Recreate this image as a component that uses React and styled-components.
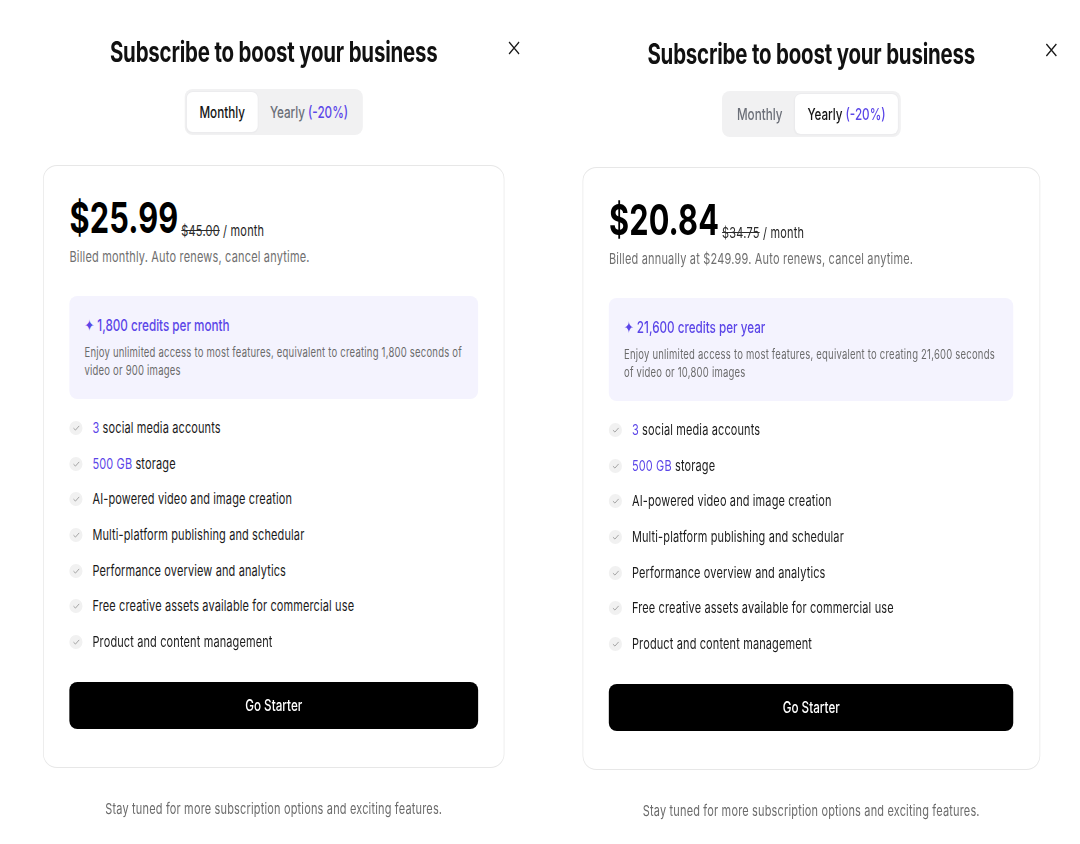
import styled, { createGlobalStyle } from "styled-components";

// The reference is a horizontally squeezed capture; lay out at full width and squeeze once.
const S = 0.73;
const w = (r) => `${(r / S).toFixed(2)}px`;

const plans = [
  {
    key: "monthly",
    offset: 0,
    cardWidth: 462,
    price: "$25.99",
    oldPrice: "$45.00",
    note: "Billed monthly. Auto renews, cancel anytime.",
    credits: "1,800 credits per month",
    creditText:
      "Enjoy unlimited access to most features, equivalent to creating 1,800 seconds of video or 900 images",
  },
  {
    key: "yearly",
    offset: 2,
    cardWidth: 458,
    price: "$20.84",
    oldPrice: "$34.75",
    note: "Billed annually at $249.99. Auto renews, cancel anytime.",
    credits: "21,600 credits per year",
    creditText:
      "Enjoy unlimited access to most features, equivalent to creating 21,600 seconds of video or 10,800 images",
  },
];

const features = [
  { accent: "3", text: "social media accounts" },
  { accent: "500 GB", text: "storage" },
  { text: "AI-powered video and image creation" },
  { text: "Multi-platform publishing and schedular" },
  { text: "Performance overview and analytics" },
  { text: "Free creative assets available for commercial use" },
  { text: "Product and content management" },
];

const CloseIcon = () => (
  <svg viewBox="0 0 12 14" width={w(12)} height="14" preserveAspectRatio="none">
    <path d="M1 1 L11 13 M11 1 L1 13" stroke="#1a1a1a" strokeWidth="1.3" fill="none" />
  </svg>
);

const CheckIcon = () => (
  <svg viewBox="0 0 10 10" width={w(8)} height="8" preserveAspectRatio="none">
    <path d="M1.5 5.2 L4 7.6 L8.6 2.4" stroke="#9a9a9a" strokeWidth="1.1" fill="none" />
  </svg>
);

const PlanPanel = ({ plan }) => (
  <Panel $offset={plan.offset}>
    <Header>
      <Title>Subscribe to boost your business</Title>
      <CloseButton aria-label="Close">
        <CloseIcon />
      </CloseButton>
    </Header>

    <Toggle>
      <Segment $active={plan.key === "monthly"}>Monthly</Segment>
      <Segment $active={plan.key === "yearly"}>
        Yearly <Accent>(-20%)</Accent>
      </Segment>
    </Toggle>

    <Card $width={plan.cardWidth}>
      <PriceRow>
        <Price>{plan.price}</Price>
        <PerMonth>
          <s>{plan.oldPrice}</s> / month
        </PerMonth>
      </PriceRow>
      <BillingNote>{plan.note}</BillingNote>

      <CreditBox>
        <CreditTitle>
          <Star>✦</Star> {plan.credits}
        </CreditTitle>
        <CreditText>{plan.creditText}</CreditText>
      </CreditBox>

      <FeatureList>
        {features.map((feature) => (
          <Feature key={feature.text}>
            <CheckBadge>
              <CheckIcon />
            </CheckBadge>
            <span>
              {feature.accent && <Accent>{feature.accent} </Accent>}
              {feature.text}
            </span>
          </Feature>
        ))}
      </FeatureList>

      <StartButton>Go Starter</StartButton>
    </Card>

    <Footer>Stay tuned for more subscription options and exciting features.</Footer>
  </Panel>
);

export default function App() {
  return (
    <>
      <GlobalStyle />
      <Stage>
        {plans.map((plan) => (
          <PlanPanel key={plan.key} plan={plan} />
        ))}
      </Stage>
    </>
  );
}

const GlobalStyle = createGlobalStyle`
  html, body {
    margin: 0;
    padding: 0;
    background: #ffffff;
    overflow: hidden;
  }
  body {
    font-family: Inter, "Noto Sans", "DejaVu Sans", sans-serif;
    color: #111111;
  }
  * {
    box-sizing: border-box;
  }
`;

const Stage = styled.div`
  display: flex;
  width: ${w(1080)};
  height: 844px;
  padding-left: ${w(5)};
  transform: scaleX(${S});
  transform-origin: 0 0;
`;

const Panel = styled.section`
  display: flex;
  flex-direction: column;
  align-items: center;
  width: ${w(537.5)};
  padding-top: ${(props) => 34 + props.$offset}px;
`;

const Header = styled.div`
  position: relative;
  display: flex;
  justify-content: center;
  width: 100%;
`;

const Title = styled.h1`
  margin: 0;
  font-size: 28px;
  line-height: 36px;
  font-weight: 700;
  letter-spacing: -0.25px;
  color: #111111;
`;

const CloseButton = styled.button`
  position: absolute;
  top: 7px;
  right: ${w(22.5)};
  display: flex;
  padding: 0;
  border: none;
  background: none;
  cursor: pointer;
`;

const Toggle = styled.div`
  display: flex;
  margin-top: 19px;
  padding: 3px ${w(2.5)};
  border-radius: ${w(8)} / 8px;
  background: #f1f1f2;
`;

const Segment = styled.div`
  display: flex;
  align-items: center;
  gap: ${w(3)};
  height: 40px;
  padding: 0 ${w(12.5)};
  border-radius: ${w(6)} / 6px;
  font-size: 16px;
  font-weight: 500;
  color: ${(props) => (props.$active ? "#151515" : "#6b6f78")};
  background: ${(props) => (props.$active ? "#ffffff" : "transparent")};
  box-shadow: ${(props) =>
    props.$active ? "0 0 0 1px #ececee, 0 1px 2px rgba(0, 0, 0, 0.04)" : "none"};
`;

const Accent = styled.span`
  color: #5b46e8;
`;

const Card = styled.div`
  display: flex;
  flex-direction: column;
  width: ${(props) => w(props.$width)};
  margin-top: 30px;
  padding: 31px ${w(26)} 38px;
  border: 1px solid #e7e7e7;
  border-radius: ${w(14)} / 14px;
  background: #ffffff;
`;

const PriceRow = styled.div`
  display: flex;
  align-items: flex-end;
  gap: ${w(3)};
`;

const Price = styled.div`
  font-size: 42px;
  line-height: 42px;
  font-weight: 700;
  letter-spacing: 0.2px;
  color: #000000;
`;

const PerMonth = styled.div`
  font-size: 15px;
  line-height: 16px;
  letter-spacing: 0.3px;
  color: #1e1e1e;

  s {
    color: #2a2a2a;
  }
`;

const BillingNote = styled.p`
  margin: 8px 0 0;
  font-size: 15px;
  line-height: 20px;
  letter-spacing: 0.28px;
  color: #6f6f6f;
`;

const CreditBox = styled.div`
  margin-top: 29px;
  padding: 18px ${w(15)} 20px;
  border-radius: ${w(8)} / 8px;
  background: #f4f3fe;
`;

const CreditTitle = styled.div`
  font-size: 16px;
  line-height: 22px;
  font-weight: 500;
  color: #5b46e8;
`;

const Star = styled.span`
  font-family: "DejaVu Sans", sans-serif;
  font-size: 16px;
`;

const CreditText = styled.p`
  margin: 6px 0 0;
  font-size: 13px;
  line-height: 18px;
  letter-spacing: 0.3px;
  color: #6b6b6b;
`;

const FeatureList = styled.ul`
  display: flex;
  flex-direction: column;
  gap: 13.67px;
  margin: 18px 0 0;
  padding: 0;
  list-style: none;
`;

const Feature = styled.li`
  display: flex;
  align-items: center;
  gap: ${w(10)};
  font-size: 15px;
  line-height: 22px;
  letter-spacing: 0.2px;
  color: #1a1a1a;
`;

const CheckBadge = styled.span`
  display: flex;
  align-items: center;
  justify-content: center;
  width: ${w(13)};
  height: 14px;
  border-radius: 50%;
  background: #f1f1f1;
  flex-shrink: 0;
`;

const StartButton = styled.button`
  margin-top: 29px;
  width: 100%;
  height: 47px;
  border: none;
  border-radius: ${w(8)} / 8px;
  background: #000000;
  color: #ffffff;
  font-family: inherit;
  font-size: 16px;
  font-weight: 500;
  cursor: pointer;
`;

const Footer = styled.p`
  margin: 31px 0 0;
  font-size: 15px;
  line-height: 20px;
  letter-spacing: 0.25px;
  color: #6b6b6b;
`;
